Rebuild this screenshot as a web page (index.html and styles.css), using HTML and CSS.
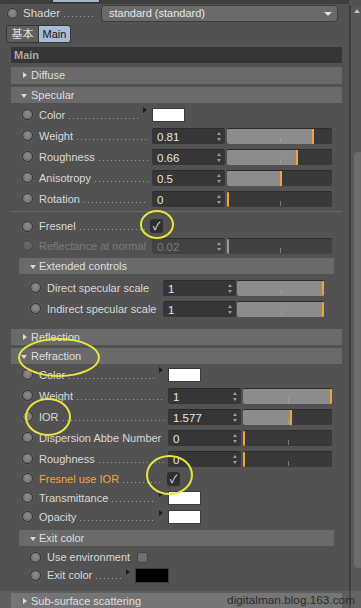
FILE: index.html
```html
<!DOCTYPE html>
<html lang="ja">
<head>
  <meta charset="UTF-8">
  <title>Shader - standard</title>
  <link rel="stylesheet" href="styles.css">
</head>
<body>
<div class="window">
  <div class="main">
    <div class="top-strip"><span class="stub"></span></div>

    <div class="shader-row">
      <span class="radio"></span>
      <span class="lbl shader-lbl">Shader</span>
      <div class="select">standard (standard)<span class="caret"></span></div>
    </div>

    <div class="tabs">
      <span class="tab">基本</span>
      <span class="tab active">Main</span>
    </div>

    <div class="group-title">Main</div>
    <div class="bar closed diffuse">Diffuse</div>
    <div class="bar open">Specular</div>

    <div class="rows spec">
      <div class="row">
        <span class="radio"></span>
        <span class="lbl short">Color</span>
        <span class="arrow"></span>
        <span class="swatch"></span>
      </div>
      <div class="row">
        <span class="radio"></span>
        <span class="lbl">Weight</span>
        <span class="num">0.81<i class="spin"></i></span>
        <span class="slider"><b class="fill" style="width:81%"></b><i class="tick"></i><b class="mark" style="left:81%"></b></span>
      </div>
      <div class="row">
        <span class="radio"></span>
        <span class="lbl">Roughness</span>
        <span class="num">0.66<i class="spin"></i></span>
        <span class="slider"><b class="fill" style="width:66%"></b><i class="tick"></i><b class="mark" style="left:66%"></b></span>
      </div>
      <div class="row">
        <span class="radio"></span>
        <span class="lbl">Anisotropy</span>
        <span class="num">0.5<i class="spin"></i></span>
        <span class="slider"><b class="fill" style="width:50%"></b><i class="tick"></i><b class="mark" style="left:50%"></b></span>
      </div>
      <div class="row">
        <span class="radio"></span>
        <span class="lbl">Rotation</span>
        <span class="num">0<i class="spin"></i></span>
        <span class="slider"><i class="tick"></i><b class="mark" style="left:0%"></b></span>
      </div>

      <div class="sep"></div>

      <div class="row check-row first">
        <span class="radio"></span>
        <span class="lbl fresnel">Fresnel</span>
        <span class="check on">✓</span>
      </div>
      <div class="row check-row dim">
        <span class="radio"></span>
        <span class="lbl nodots">Reflectance at normal</span>
        <span class="num">0.02<i class="spin"></i></span>
        <span class="slider"><i class="tick"></i><b class="mark grey" style="left:0%"></b></span>
      </div>

      <div class="subbar">Extended controls</div>
      <div class="rows ext">
        <div class="row">
          <span class="radio"></span>
          <span class="lbl nodots">Direct specular scale</span>
          <span class="num">1<i class="spin"></i></span>
          <span class="slider"><b class="fill" style="width:100%"></b><i class="tick"></i><b class="mark end"></b></span>
        </div>
        <div class="row">
          <span class="radio"></span>
          <span class="lbl nodots">Indirect specular scale</span>
          <span class="num">1<i class="spin"></i></span>
          <span class="slider"><b class="fill" style="width:100%"></b><i class="tick"></i><b class="mark end"></b></span>
        </div>
      </div>
    </div>

    <div class="bar closed reflection">Reflection</div>
    <div class="bar open">Refraction</div>

    <div class="rows refr">
      <div class="row">
        <span class="radio"></span>
        <span class="lbl short">Color</span>
        <span class="arrow"></span>
        <span class="swatch"></span>
      </div>
      <div class="row">
        <span class="radio"></span>
        <span class="lbl">Weight</span>
        <span class="num">1<i class="spin"></i></span>
        <span class="slider"><b class="fill" style="width:100%"></b><i class="tick"></i><b class="mark end"></b></span>
      </div>
      <div class="row">
        <span class="radio"></span>
        <span class="lbl">IOR</span>
        <span class="num">1.577<i class="spin"></i></span>
        <span class="slider"><b class="fill" style="width:53%"></b><i class="tick"></i><b class="mark" style="left:53%"></b></span>
      </div>
      <div class="row">
        <span class="radio"></span>
        <span class="lbl nodots">Dispersion Abbe Number</span>
        <span class="num">0<i class="spin"></i></span>
        <span class="slider"><i class="tick"></i><b class="mark" style="left:0%"></b></span>
      </div>
      <div class="row">
        <span class="radio"></span>
        <span class="lbl">Roughness</span>
        <span class="num">0<i class="spin"></i></span>
        <span class="slider"><i class="tick"></i><b class="mark" style="left:0%"></b></span>
      </div>
      <div class="row check-row">
        <span class="radio"></span>
        <span class="lbl orange">Fresnel use IOR</span>
        <span class="check on">✓</span>
      </div>
      <div class="row check-row">
        <span class="radio"></span>
        <span class="lbl short">Transmittance</span>
        <span class="arrow"></span>
        <span class="swatch"></span>
      </div>
      <div class="row check-row">
        <span class="radio"></span>
        <span class="lbl short">Opacity</span>
        <span class="arrow"></span>
        <span class="swatch"></span>
      </div>

      <div class="subbar exit-bar">Exit color</div>
      <div class="rows exit">
        <div class="row">
          <span class="radio"></span>
          <span class="lbl nodots env">Use environment</span>
          <span class="check off"></span>
        </div>
        <div class="row">
          <span class="radio"></span>
          <span class="lbl exitlbl">Exit color</span>
          <span class="arrow"></span>
          <span class="swatch black"></span>
        </div>
      </div>
    </div>

    <div class="bar closed sss">Sub-surface scattering</div>
  </div>

  <div class="scrollbar"><span class="up"></span><span class="thumb"></span></div>

  <!-- hand-drawn yellow marks -->
  <span class="mark-circle c1"></span>
  <span class="mark-circle c2"></span>
  <span class="mark-circle c3"></span>
  <span class="mark-circle c4"></span>

  <div class="watermark">digitalman.blog.163.com</div>
</div>
</body>
</html>
```

FILE: styles.css
```css
html, body {
  margin: 0;
  padding: 0;
  height: 608px;
  overflow: hidden;
  background-color: #525252;
}

body {
  font-family: 'Liberation Sans', Arial, 'Noto Sans CJK JP', sans-serif;
  font-size: 11px;
  color: #d8d8d8;
}

.window {
  position: relative;
  display: flex;
  height: 608px;
  overflow: hidden;
}

.main {
  width: 349px;
  flex: none;
}

/* top */
.top-strip {
  height: 4px;
  background-color: #3e3e3e;
}

.top-strip .stub {
  display: block;
  margin-left: 52px;
  width: 46px;
  height: 2px;
  background-color: #a4b5cc;
  border: 1px solid #2c2c2c;
  border-top: none;
}

.shader-row {
  display: flex;
  align-items: center;
  height: 16px;
  margin-top: 1px;
}

.shader-row .radio {
  margin-left: 7px;
}

.shader-row .lbl {
  width: 76px;
  margin-left: 5px;
  font-size: 11.5px;
}

.select {
  position: relative;
  width: 228px;
  height: 15px;
  line-height: 15px;
  margin-left: 2px;
  padding-left: 7px;
  background-color: #6a6a6a;
  border: 1px solid #3c3c3c;
  border-radius: 4px;
  color: #e6e6e6;
}

.caret {
  position: absolute;
  right: 5px;
  top: 6px;
  border-left: 4px solid transparent;
  border-right: 4px solid transparent;
  border-top: 4px solid #dcdcdc;
}

.tabs {
  display: flex;
  margin: 4px 0 0 6px;
  height: 18px;
}

.tab {
  display: block;
  height: 16px;
  line-height: 16px;
  padding: 0 3px;
  width: 25px;
  text-align: center;
  border: 1px solid #353535;
  background-color: #5e5e5e;
  color: #dcdcdc;
  border-radius: 3px 0 0 3px;
}

.tab.active {
  background-color: #a9bcd8;
  color: #141414;
  border-left: none;
  border-radius: 0 3px 3px 0;
}

/* section bars */
.group-title {
  margin: 4px 7px 0 11px;
  height: 16px;
  line-height: 16px;
  padding-left: 3px;
  background-color: #363636;
  color: #a8a8a8;
  font-weight: bold;
}

.bar {
  position: relative;
  margin: 3px 7px 0 11px;
  height: 16px;
  line-height: 16px;
  padding-left: 20px;
  background-color: #6a6a6a;
  color: #dedede;
}

.bar.diffuse {
  margin-top: 4px;
  height: 17px;
  line-height: 17px;
}

.bar.reflection {
  margin-top: 10px;
}

.bar.sss {
  margin-top: 9px;
}

.bar::before,
.subbar::before {
  content: '';
  position: absolute;
  left: 12px;
  top: 5px;
}

.bar.closed::before {
  border-top: 3px solid transparent;
  border-bottom: 3px solid transparent;
  border-left: 4px solid #d8d8d8;
}

.bar.open::before {
  left: 10px;
  top: 7px;
  border-left: 3px solid transparent;
  border-right: 3px solid transparent;
  border-top: 4px solid #d8d8d8;
}

.subbar {
  position: relative;
  margin: 3px 15px 0 8px;
  height: 16px;
  line-height: 16px;
  padding-left: 20px;
  background-color: #6a6a6a;
  color: #dedede;
}

.subbar.exit-bar {
  margin-top: 4px;
}

.subbar::before {
  left: 11px;
  top: 7px;
  border-left: 3px solid transparent;
  border-right: 3px solid transparent;
  border-top: 4px solid #d8d8d8;
}

/* rows */
.spec,
.refr {
  margin-left: 11px;
}

.spec {
  padding-top: 1px;
}

.row {
  display: flex;
  align-items: center;
  height: 21px;
  padding-left: 11px;
}

.check-row {
  height: 19px;
}

.check-row.first {
  height: 20px;
}

.radio {
  display: block;
  flex: none;
  width: 9px;
  height: 9px;
  border-radius: 50%;
  border: 1px solid #333;
  background: radial-gradient(circle at 50% 40%, #8c8c8c, #6c6c6c);
  box-shadow: 0 0 0 1px #5c5c5c;
}

.lbl {
  display: flex;
  flex: none;
  margin-left: 6px;
  white-space: nowrap;
}

.lbl::after {
  content: '';
  flex: 1;
  margin: 0 4px;
  height: 10px;
  background-image: linear-gradient(to right, #9a9a9a 1px, transparent 1px);
  background-size: 4px 1px;
  background-repeat: repeat-x;
  background-position: left bottom;
}

.lbl.nodots::after {
  background: none;
}

.orange {
  color: #f2a63a;
}

.spec .lbl { width: 113px; }
.spec .lbl.short { width: 104px; }
.spec .lbl.fresnel { width: 111px; }

.refr .lbl { width: 129px; }
.refr .lbl.short { width: 120px; }
.refr .lbl.orange { width: 128px; }

.ext .row,
.exit .row {
  padding-left: 19px;
}

.ext {
  margin-top: 3px;
}

.ext .lbl { width: 116px; }

.exit {
  margin-top: 2px;
}

.exit .row {
  height: 18px;
}

.exit .lbl.env { width: 90px; }
.exit .lbl.exitlbl { width: 79px; }

.num {
  position: relative;
  flex: none;
  box-sizing: border-box;
  width: 73px;
  height: 16px;
  line-height: 16px;
  padding-left: 5px;
  background-color: #363636;
  border-top: 1px solid #2a2a2a;
  border-radius: 2px;
  color: #e4e4e4;
  font-size: 11.5px;
}

.spin {
  position: absolute;
  right: 3px;
  top: 3px;
  width: 5px;
  height: 9px;
}

.spin::before,
.spin::after {
  content: '';
  position: absolute;
  left: 0;
  border-left: 2.5px solid transparent;
  border-right: 2.5px solid transparent;
}

.spin::before {
  top: 0;
  border-bottom: 3px solid #9a9a9a;
}

.spin::after {
  bottom: 0;
  border-top: 3px solid #9a9a9a;
}

.slider {
  position: relative;
  flex: none;
  box-sizing: border-box;
  width: 105px;
  height: 16px;
  margin-left: 2px;
  background-color: #393939;
  border-top: 1px solid #2c2c2c;
  border-radius: 2px;
  overflow: hidden;
}

.refr .slider {
  width: 89px;
}

.ext .slider {
  width: 87px;
  margin-left: 1px;
}

.fill {
  position: absolute;
  left: 0;
  top: 0;
  bottom: 0;
  background-color: #8c8c8c;
}

.tick {
  position: absolute;
  left: 50%;
  top: 9px;
  width: 1px;
  height: 5px;
  background-color: #aaa;
  opacity: 0.6;
}

.mark {
  position: absolute;
  top: 0;
  bottom: 0;
  width: 2px;
  background-color: #f2a533;
}

.mark.end {
  right: 0;
}

.mark.grey {
  background-color: #9a9a9a;
}

.dim {
  color: #7c7c7c;
}

.dim .radio {
  opacity: 0.4;
}

.dim .num {
  background-color: #424242;
  color: #7a7a7a;
}

.dim .slider {
  background-color: #414141;
}

.arrow {
  flex: none;
  width: 0;
  height: 0;
  margin-right: 5px;
  margin-top: 3px;
  align-self: flex-start;
  border-top: 3px solid transparent;
  border-bottom: 3px solid transparent;
  border-left: 4px solid #1e1e1e;
}

.swatch {
  flex: none;
  box-sizing: border-box;
  width: 33px;
  height: 14px;
  background-color: #fff;
  border: 1px solid #3a3a3a;
}

.swatch.black {
  width: 34px;
  height: 15px;
  background-color: #000;
}

.check {
  flex: none;
  box-sizing: border-box;
  width: 13px;
  height: 14px;
  line-height: 14px;
  text-align: center;
  border-radius: 3px;
}

.check.on {
  background-color: #2f2f2f;
  color: #eaeaea;
}

.check.off {
  width: 11px;
  height: 11px;
  background-color: #6f6f6f;
  border: 1px solid #454545;
}

.sep {
  height: 1px;
  margin: 2px 7px 4px 0;
  background-color: #6a6a6a;
}

/* scrollbar */
.scrollbar {
  position: relative;
  flex: 1;
  margin-top: 5px;
  background-color: #575757;
  border-left: 2px solid #3b3b3b;
}

.scrollbar .up {
  position: absolute;
  left: 3px;
  top: 4px;
  border-left: 3px solid transparent;
  border-right: 3px solid transparent;
  border-bottom: 4px solid #bdbdbd;
}

.scrollbar .thumb {
  position: absolute;
  left: 3px;
  right: 0;
  top: 147px;
  height: 416px;
  background-color: #6c6c6c;
  border-radius: 4px 0 0 4px;
}

/* annotation circles */
.mark-circle {
  position: absolute;
  box-sizing: border-box;
  border: 2px solid #e8e63c;
  border-radius: 50%;
}

.c1 { left: 140px; top: 210px; width: 34px; height: 29px; }
.c2 { left: 18px; top: 338px; width: 82px; height: 39px; }
.c3 { left: 25px; top: 398px; width: 46px; height: 38px; }
.c4 { left: 146px; top: 455px; width: 47px; height: 40px; }

.watermark {
  position: absolute;
  left: 0;
  right: 0;
  bottom: 0;
  height: 17px;
  line-height: 19px;
  padding-right: 6px;
  text-align: right;
  background-color: rgba(255, 255, 255, 0.08);
  color: #2b2b2b;
  font-size: 11.8px;
}
```
